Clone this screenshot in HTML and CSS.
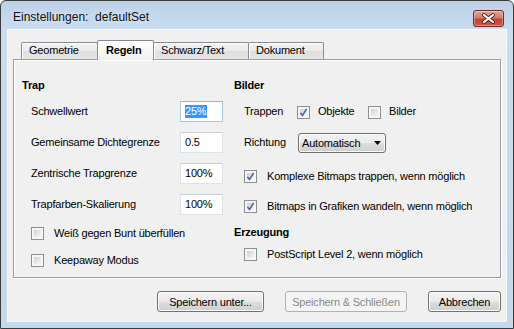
FILE: index.html
```html
<!DOCTYPE html>
<html lang="de">
<head>
    <meta charset="UTF-8">
    <title>Einstellungen: defaultSet</title>
    <link rel="stylesheet" href="styles.css">
</head>
<body>
    <div class="window">
        <div class="titlebar">
            <span class="title">Einstellungen:&nbsp; defaultSet</span>
            <span class="close-btn">
                <svg width="29" height="15" viewBox="0 0 29 15">
                    <path d="M10 4 L19 11 M19 4 L10 11" stroke="#5b2620" stroke-width="4" stroke-linecap="round"/>
                    <path d="M10 4 L19 11 M19 4 L10 11" stroke="#ffffff" stroke-width="2.2" stroke-linecap="round"/>
                </svg>
            </span>
        </div>

        <div class="client">
            <div class="tabs">
                <div class="tab tab-geo">Geometrie</div>
                <div class="tab tab-active">Regeln</div>
                <div class="tab tab-sw">Schwarz/Text</div>
                <div class="tab tab-doc">Dokument</div>
            </div>

            <div class="panel">
                <!-- linke Spalte -->
                <div class="col col-left">
                    <div class="heading">Trap</div>
                    <div class="field-row">
                        <span class="field-label">Schwellwert</span>
                        <span class="input input-focus"><span class="selected-text">25%</span></span>
                    </div>
                    <div class="field-row">
                        <span class="field-label">Gemeinsame Dichtegrenze</span>
                        <span class="input">0.5</span>
                    </div>
                    <div class="field-row">
                        <span class="field-label">Zentrische Trapgrenze</span>
                        <span class="input">100%</span>
                    </div>
                    <div class="field-row">
                        <span class="field-label">Trapfarben-Skalierung</span>
                        <span class="input">100%</span>
                    </div>
                    <div class="check-row first-check">
                        <span class="checkbox"></span>
                        <span class="check-text">Weiß gegen Bunt überfüllen</span>
                    </div>
                    <div class="check-row second-check">
                        <span class="checkbox"></span>
                        <span class="check-text">Keepaway Modus</span>
                    </div>
                </div>

                <!-- rechte Spalte -->
                <div class="col col-right">
                    <div class="heading">Bilder</div>
                    <div class="field-row">
                        <span class="label-trappen">Trappen</span>
                        <span class="checkbox checkbox-inline checked">
                            <svg width="9" height="9" viewBox="0 0 9 9"><path d="M1.4 4.8 L3.5 7.5 L7.6 1" fill="none" stroke="#4a64a3" stroke-width="1.5"/></svg>
                        </span>
                        <span class="label-objekte">Objekte</span>
                        <span class="checkbox checkbox-inline"></span>
                        <span class="label-bilder">Bilder</span>
                    </div>
                    <div class="field-row">
                        <span class="label-richtung">Richtung</span>
                        <span class="select">
                            Automatisch
                            <svg class="select-arrow" width="7" height="4" viewBox="0 0 7 4"><path d="M0 0 H7 L3.5 4 Z" fill="#000"/></svg>
                        </span>
                    </div>
                    <div class="check-row check-komplex">
                        <span class="checkbox checked">
                            <svg width="9" height="9" viewBox="0 0 9 9"><path d="M1.4 4.8 L3.5 7.5 L7.6 1" fill="none" stroke="#4a64a3" stroke-width="1.5"/></svg>
                        </span>
                        <span class="check-text">Komplexe Bitmaps trappen, wenn möglich</span>
                    </div>
                    <div class="check-row check-bitmaps">
                        <span class="checkbox checked">
                            <svg width="9" height="9" viewBox="0 0 9 9"><path d="M1.4 4.8 L3.5 7.5 L7.6 1" fill="none" stroke="#4a64a3" stroke-width="1.5"/></svg>
                        </span>
                        <span class="check-text">Bitmaps in Grafiken wandeln, wenn möglich</span>
                    </div>
                    <div class="heading heading-erzeugung">Erzeugung</div>
                    <div class="check-row check-postscript">
                        <span class="checkbox"></span>
                        <span class="check-text">PostScript Level 2, wenn möglich</span>
                    </div>
                </div>
            </div>

            <div class="buttons">
                <button class="btn btn-save-as">Speichern unter...</button>
                <button class="btn btn-save-close" disabled>Speichern &amp; Schließen</button>
                <button class="btn btn-cancel">Abbrechen</button>
            </div>
        </div>
    </div>
</body>
</html>
```

FILE: styles.css
```css
* {
    margin: 0;
    padding: 0;
    box-sizing: border-box;
}

body {
    font-family: "Liberation Sans", Arial, sans-serif;
    font-size: 11px;
    letter-spacing: -0.2px;
    color: #000;
    background-color: #ffffff;
}

.window {
    width: 514px;
    height: 329px;
    border: 1px solid #3c3c3c;
    border-radius: 6px 6px 0 0;
    padding: 0 6px 6px 6px;
    background: linear-gradient(to bottom, #bcd1e9 0px, #cadcef 28px, #c4d8ee 100%);
}

.titlebar {
    height: 28px;
    display: flex;
    align-items: flex-start;
    justify-content: space-between;
}

.title {
    font-size: 12px;
    letter-spacing: 0;
    margin-top: 9px;
    margin-left: 6px;
    color: #111;
    text-shadow: 0 0 6px #e8f0f8;
}

.close-btn {
    width: 31px;
    height: 17px;
    margin-top: 9px;
    margin-right: 3px;
    border: 1px solid #6b2a24;
    border-radius: 3px;
    background: linear-gradient(to bottom, #e2a596 0%, #d47a6b 45%, #c2432f 55%, #c95a43 100%);
    box-shadow: inset 0 0 0 1px rgba(255, 255, 255, 0.35);
    display: flex;
    align-items: center;
    justify-content: center;
}

.client {
    height: 293px;
    border: 1px solid #f4f7fb;
    background-color: #f0f0f0;
    padding: 10px 5px 0 5px;
}

.tabs {
    height: 19px;
    padding-left: 8px;
    display: flex;
    align-items: flex-end;
    position: relative;
    z-index: 1;
}

.tab {
    height: 17px;
    border: 1px solid #898c95;
    border-bottom: none;
    border-radius: 2px 2px 0 0;
    background: linear-gradient(to bottom, #f3f3f3 0%, #ebebeb 50%, #dedede 51%, #e6e6e6 100%);
    box-shadow: inset 1px 1px 0 #fff;
    padding-left: 7px;
    line-height: 15px;
    margin-left: -1px;
}

.tab-geo {
    width: 77px;
    margin-left: 0;
}

.tab-active {
    width: 57px;
    height: 20px;
    margin-bottom: -1px;
    padding-left: 8px;
    font-weight: bold;
    background: linear-gradient(to bottom, #ffffff, #f0f0f0);
    line-height: 19px;
    position: relative;
    z-index: 2;
}

.tab-sw {
    width: 96px;
}

.tab-doc {
    width: 76px;
}

.panel {
    height: 219px;
    border: 1px solid #9a9da4;
    box-shadow: 1px 1px 0 #ffffff, inset 1px 1px 0 #ffffff;
    padding: 18px 0 0 8px;
    display: flex;
}

.col-left {
    width: 212px;
}

.col-right {
    flex: 1;
}

.heading {
    height: 14px;
    line-height: 14px;
    font-weight: bold;
    margin-bottom: 9px;
}

.heading-erzeugung {
    margin-top: 12px;
    margin-bottom: 0;
}

.field-row {
    height: 31px;
    display: flex;
    align-items: flex-start;
    line-height: 21px;
}

.col-left .field-row {
    padding-left: 9px;
}

.col-right .field-row {
    padding-left: 10px;
}

.field-label {
    width: 149px;
}

.input {
    width: 43px;
    height: 21px;
    background-color: #fff;
    border: 1px solid #dde2e7;
    border-top-color: #c9ced4;
    padding-left: 4px;
    line-height: 18px;
}

.input-focus {
    border-color: #a9c8e6;
    border-top-color: #8fb6df;
}

.selected-text {
    display: inline-block;
    background-color: #3399ff;
    color: #fff;
    line-height: 13px;
    padding: 0 1px 0 0;
}

.check-row {
    height: 14px;
    display: flex;
    align-items: center;
}

.col-left .check-row {
    padding-left: 9px;
}

.col-right .check-row {
    padding-left: 10px;
}

.first-check {
    margin-top: 1px;
}

.second-check {
    margin-top: 13px;
}

.check-komplex {
    margin-top: 6px;
}

.check-bitmaps {
    margin-top: 16px;
}

.check-postscript {
    margin-top: 8px;
}

.check-text {
    margin-left: 10px;
}

.checkbox {
    width: 13px;
    height: 13px;
    flex: none;
    border: 1px solid #8e8f8f;
    padding: 2px;
    background: linear-gradient(135deg, #cdd1d6, #f7f7f7) content-box, #f6f6f6 padding-box;
    display: flex;
    align-items: center;
    justify-content: center;
}

.checkbox-inline {
    margin-top: 5px;
}

.checkbox svg {
    margin: -2px;
    flex: none;
}

.label-trappen {
    width: 53px;
}

.label-objekte {
    width: 50px;
    margin-left: 8px;
}

.label-bilder {
    margin-left: 8px;
}

.label-richtung {
    width: 54px;
}

.select {
    width: 88px;
    height: 20px;
    margin-top: 1px;
    border: 1px solid #707070;
    border-radius: 3px;
    background: linear-gradient(to bottom, #f2f2f2 0%, #ebebeb 50%, #dddddd 51%, #cfcfcf 100%);
    box-shadow: inset 0 0 0 1px #fcfcfc;
    padding-left: 3px;
    line-height: 17px;
    display: flex;
    align-items: center;
}

.select-arrow {
    margin-left: 14px;
}

.buttons {
    margin-top: 13px;
    display: flex;
    justify-content: flex-end;
    gap: 21px;
}

.btn {
    height: 21px;
    font-family: "Liberation Sans", Arial, sans-serif;
    font-size: 11px;
    letter-spacing: -0.2px;
    color: #000;
    border: 1px solid #707070;
    border-radius: 3px;
    background: linear-gradient(to bottom, #f2f2f2 0%, #ebebeb 50%, #dddddd 51%, #cfcfcf 100%);
    box-shadow: inset 0 0 0 1px #fcfcfc;
}

.btn-save-as {
    width: 107px;
}

.btn-save-close {
    width: 122px;
    color: #8a8a8a;
    border-color: #adb2b5;
    background: #f4f4f4;
    box-shadow: none;
}

.btn-cancel {
    width: 73px;
}
```
